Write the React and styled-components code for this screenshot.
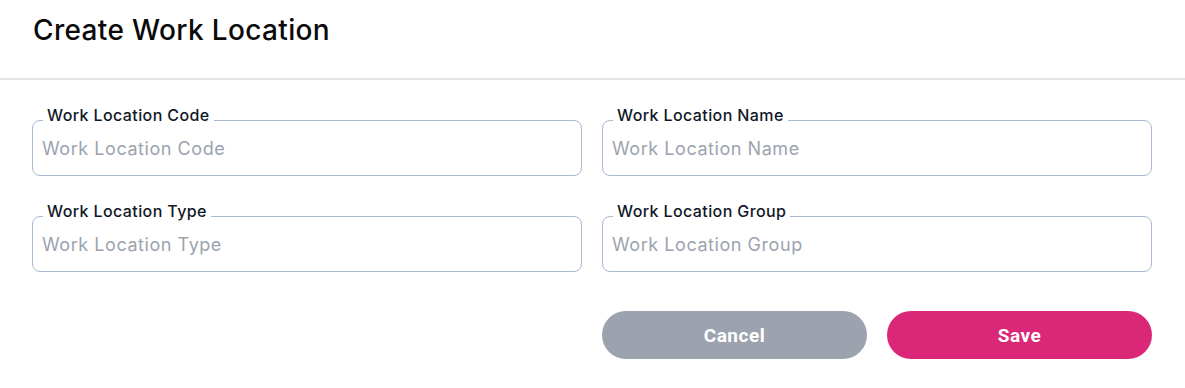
import styled, { createGlobalStyle } from "styled-components"

const GlobalStyle = createGlobalStyle`
  * {
    box-sizing: border-box;
  }

  body {
    margin: 0;
    background: #ffffff;
    font-family: Inter, "Noto Sans", sans-serif;
  }
`

const Page = styled.div`
  width: 100%;
  min-height: 388px;
  background: #ffffff;
`

const Header = styled.header`
  height: 80px;
  padding: 13px 33px 0;
  border-bottom: 2px solid #e4e4e7;
`

const Title = styled.h1`
  margin: 0;
  font-size: 28px;
  line-height: 34px;
  font-weight: 500;
  letter-spacing: 0.35px;
  color: #0a0a0a;
`

const Body = styled.div`
  padding: 40px 33px 30px 32px;
  display: flex;
  flex-direction: column;
  gap: 39px;
`

const Grid = styled.div`
  display: grid;
  grid-template-columns: 1fr 1fr;
  column-gap: 20px;
  row-gap: 40px;
`

const Field = styled.div`
  position: relative;
`

const FloatingLabel = styled.label`
  position: absolute;
  top: -14px;
  left: 11px;
  padding: 0 4px;
  background: #ffffff;
  font-size: 16px;
  line-height: 19px;
  font-weight: 500;
  letter-spacing: 0.4px;
  color: #111827;
`

const Input = styled.input`
  width: 100%;
  height: 56px;
  padding: 0 9px;
  border: 1px solid #a9bbd2;
  border-radius: 8px;
  background: #ffffff;
  font-family: Inter, "Noto Sans", sans-serif;
  font-size: 18px;
  letter-spacing: 0.55px;
  color: #111827;
  outline: none;

  &::placeholder {
    color: #9ca3af;
  }
`

const Footer = styled.div`
  display: grid;
  grid-template-columns: 1fr 1fr;
  column-gap: 20px;
`

const Actions = styled.div`
  grid-column: 2;
  display: flex;
  gap: 20px;
`

const Button = styled.button`
  flex: 1;
  height: 48px;
  border: none;
  border-radius: 24px;
  background: ${(props) => (props.$primary ? "#db2777" : "#9ca3af")};
  color: #ffffff;
  font-family: Roboto, "Liberation Sans", sans-serif;
  font-size: 19px;
  font-weight: 700;
  letter-spacing: 0.5px;
  cursor: pointer;
`

const fields = [
  { id: "code", label: "Work Location Code" },
  { id: "name", label: "Work Location Name" },
  { id: "type", label: "Work Location Type" },
  { id: "group", label: "Work Location Group" },
]

export default function App() {
  return (
    <Page>
      <GlobalStyle />
      <Header>
        <Title>Create Work Location</Title>
      </Header>
      <Body>
        <Grid>
          {fields.map((f) => (
            <Field key={f.id}>
              <FloatingLabel htmlFor={f.id}>{f.label}</FloatingLabel>
              <Input id={f.id} placeholder={f.label} />
            </Field>
          ))}
        </Grid>
        <Footer>
          <Actions>
            <Button type="button">Cancel</Button>
            <Button type="button" $primary>
              Save
            </Button>
          </Actions>
        </Footer>
      </Body>
    </Page>
  )
}
